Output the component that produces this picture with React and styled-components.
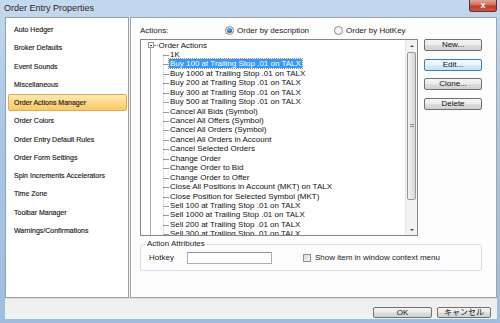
import React from "react";
import styled, { createGlobalStyle, css } from "styled-components";

const Global = createGlobalStyle`
  html, body { margin: 0; padding: 0; background: #fff; }
  body { font-family: "Liberation Sans", Arial, sans-serif; }
  * { box-sizing: border-box; }
`;

// window frame
const Window = styled.div`
  width: 500px;
  height: 323px;
  display: flex;
  flex-direction: column;
  padding: 0 3px 4px 5px;
  background: linear-gradient(180deg, #c3d8ee 0%, #aac6e5 40%, #9fbddf 100%);
  overflow: hidden;
`;

const TitleBar = styled.div`
  height: 17px;
  flex: none;
  display: flex;
  align-items: flex-start;
  justify-content: space-between;
`;

const Title = styled.div`
  margin-left: -1px;
  font-size: 9px;
  line-height: 17px;
  color: #1a1a1a;
  text-shadow: 0 0 4px #e8f1fb;
`;

const CloseBtn = styled.div`
  width: 28px;
  height: 12px;
  display: flex;
  align-items: center;
  justify-content: center;
  border: 1px solid #6b2a22;
  border-top: none;
  border-radius: 0 0 3px 3px;
  background: linear-gradient(180deg, #e4a597 0%, #cf6e5b 45%, #bb3f2c 55%, #c9593f 100%);
  color: #fff;
  font-size: 9px;
  font-weight: bold;
  line-height: 1;
`;

// body: sidebar + content
const Body = styled.div`
  flex: 1;
  min-height: 0;
  display: flex;
  background: #f0f0f0;
`;

const Sidebar = styled.div`
  width: 124px;
  flex: none;
  background: #fff;
  border: 1px solid #9a9fa6;
  padding: 3px 1px 0 2px;
`;

const NavItem = styled.div`
  height: 17px;
  margin-bottom: 1.25px;
  padding-left: 5px;
  display: flex;
  align-items: center;
  font-size: 7px;
  color: #1c1c1c;
  -webkit-text-stroke: 0.15px #1c1c1c;
  border: 1px solid transparent;
  border-radius: 2px;
  ${(p) =>
    p.$active &&
    css`
      background: linear-gradient(180deg, #fdeab0 0%, #fcd98a 50%, #f9c869 100%);
      border-color: #e7a94a;
    `}
`;

const Content = styled.div`
  flex: 1;
  margin-left: 1px;
  background: #fdfdfd;
  border: 1px solid #a0a4aa;
  padding: 7px 0 0 9px;
  display: flex;
  flex-direction: column;
`;

const TopRow = styled.div`
  height: 11px;
  display: flex;
  align-items: center;
  font-size: 8px;
  color: #1a1a1a;
`;

const ActionsLabel = styled.span`
  width: 85px;
`;

const RadioOption = styled.label`
  display: flex;
  align-items: center;
  gap: 3px;
  margin-right: ${(p) => p.$gap || 0}px;
`;

const Radio = styled.span`
  width: 9px;
  height: 9px;
  border-radius: 50%;
  border: 1px solid #8a8c8e;
  background: radial-gradient(circle at 50% 40%, #ffffff 0%, #e4e4e4 100%);
  display: flex;
  align-items: center;
  justify-content: center;
  &::after {
    content: "";
    width: 5px;
    height: 5px;
    border-radius: 50%;
    background: ${(p) =>
      p.$checked ? "radial-gradient(circle at 40% 35%, #7eb3e6 0%, #1d5b98 70%)" : "transparent"};
  }
`;

const MainRow = styled.div`
  display: flex;
  gap: 6px;
  margin-top: 3px;
`;

const TreeBox = styled.div`
  width: 278px;
  height: 197px;
  border: 1px solid #828790;
  background: #fff;
  display: flex;
`;

const TreeList = styled.div`
  flex: 1;
  overflow: hidden;
  padding-top: 0.5px;
  font-size: 8px;
  line-height: 9.45px;
  color: #111;
  background: linear-gradient(#a8a8a8, #a8a8a8) no-repeat 9px 7px / 1px 100%,
    repeating-linear-gradient(180deg, #c4c4c4 0 1px, transparent 1px 2px) no-repeat 22px 14px / 1px 100%;
`;

const RootRow = styled.div`
  height: 9.45px;
  display: flex;
  align-items: center;
  padding-left: 6.5px;
  white-space: nowrap;
`;

const Expander = styled.span`
  width: 6px;
  height: 6px;
  border: 1px solid #8f8f8f;
  background: #fff;
  display: flex;
  align-items: center;
  justify-content: center;
  &::after {
    content: "";
    width: 2px;
    height: 1px;
    background: #333;
  }
`;

const RootDash = styled.span`
  width: 4px;
  margin: 0 1px 0 0;
  border-top: 1px dotted #8f8f8f;
`;

const ChildRow = styled.div`
  position: relative;
  height: 9.45px;
  padding-left: 28px;
  white-space: nowrap;
  &::before {
    content: "";
    position: absolute;
    left: 22px;
    top: 5px;
    width: 6px;
    border-top: 1px solid #9a9a9a;
  }
`;

const ItemText = styled.span`
  padding: 0 1px;
  ${(p) =>
    p.$selected &&
    css`
      background: #3399ff;
      color: #fff;
      outline: 1px dotted #c08a3e;
    `}
`;

const Scrollbar = styled.div`
  width: 12px;
  flex: none;
  display: flex;
  flex-direction: column;
  background: #f2f2f2;
  border-left: 1px solid #e8e8e8;
`;

const ScrollArrow = styled.div`
  height: 11px;
  display: flex;
  align-items: center;
  justify-content: center;
  &::after {
    content: "";
    border-left: 2px solid transparent;
    border-right: 2px solid transparent;
    ${(p) => (p.$down ? "border-top: 2px solid #444;" : "border-bottom: 2px solid #444;")}
  }
`;

const Track = styled.div`
  flex: 1;
  padding: 1px 1px 0;
`;

const Thumb = styled.div`
  height: 148px;
  border: 1px solid #979797;
  border-radius: 2px;
  background: linear-gradient(90deg, #f3f3f3 0%, #e5e5e5 50%, #d8d8d8 100%);
  display: flex;
  align-items: center;
  justify-content: center;
  &::after {
    content: "";
    width: 4px;
    height: 4px;
    background: repeating-linear-gradient(180deg, #8a8a8a 0 1px, transparent 1px 2px);
  }
`;

const ButtonCol = styled.div`
  display: flex;
  flex-direction: column;
  gap: 7.5px;
`;

const PushButton = styled.button`
  width: ${(p) => p.$w || 58}px;
  height: ${(p) => p.$h || 12}px;
  padding: 0;
  font-family: "Liberation Sans", "Noto Sans CJK JP", sans-serif;
  font-size: 8px;
  line-height: 10px;
  color: #111;
  border-radius: 2px;
  border: 1px solid #707070;
  background: linear-gradient(180deg, #f4f4f4 0%, #ececec 48%, #dddddd 52%, #d0d0d0 100%);
  ${(p) =>
    p.$default &&
    css`
      border-color: #3c7fb1;
      background: linear-gradient(180deg, #f4fafe 0%, #e6f3fc 48%, #d5ecfb 52%, #c6e5fb 100%);
    `}
`;

const GroupBox = styled.fieldset`
  width: 342px;
  margin: 3px 0 0;
  padding: 2px 8px 6px;
  border: 1px solid #d5dfe5;
  border-radius: 3px;
  min-inline-size: 0;
`;

const Legend = styled.legend`
  padding: 0 2px;
  margin-left: -4px;
  font-size: 8px;
  line-height: 10px;
  color: #1a1a1a;
`;

const AttrRow = styled.div`
  height: 13px;
  display: flex;
  align-items: center;
  font-size: 8px;
  color: #1a1a1a;
`;

const AttrLabel = styled.span`
  width: 38px;
`;

const TextInput = styled.div`
  width: 85px;
  height: 12px;
  border: 1px solid #abadb3;
  border-top-color: #8e9199;
  background: #fff;
`;

const CheckOption = styled.label`
  margin-left: 31px;
  display: flex;
  align-items: center;
  gap: 4px;
`;

const Checkbox = styled.span`
  width: 8px;
  height: 8px;
  border: 1px solid #8e8f8f;
  background: linear-gradient(135deg, #d9d9d9 0%, #f4f4f4 100%);
`;

const Footer = styled.div`
  height: 21px;
  flex: none;
  display: flex;
  justify-content: flex-end;
  align-items: flex-start;
  gap: 5px;
  padding: 8px 6px 0 0;
  background: #f0f0f0;
  border-top: 1px solid #dcdcdc;
`;

const navItems = [
  "Auto Hedger",
  "Broker Defaults",
  "Event Sounds",
  "Miscellaneous",
  "Order Actions Manager",
  "Order Colors",
  "Order Entry Default Rules",
  "Order Form Settings",
  "Spin Increments Accelerators",
  "Time Zone",
  "Toolbar Manager",
  "Warnings/Confirmations",
];

const actions = [
  "1K",
  "Buy 100 at Trailing Stop .01 on TALX",
  "Buy 1000 at Trailing Stop .01 on TALX",
  "Buy 200 at Trailing Stop .01 on TALX",
  "Buy 300 at Trailing Stop .01 on TALX",
  "Buy 500 at Trailing Stop .01 on TALX",
  "Cancel All Bids (Symbol)",
  "Cancel All Offers (Symbol)",
  "Cancel All Orders (Symbol)",
  "Cancel All Orders in Account",
  "Cancel Selected Orders",
  "Change Order",
  "Change Order to Bid",
  "Change Order to Offer",
  "Close All Positions in Account (MKT) on TALX",
  "Close Position for Selected Symbol (MKT)",
  "Sell 100 at Trailing Stop .01 on TALX",
  "Sell 1000 at Trailing Stop .01 on TALX",
  "Sell 200 at Trailing Stop .01 on TALX",
  "Sell 300 at Trailing Stop .01 on TALX",
];

export default function App() {
  return (
    <>
      <Global />
      <Window>
        <TitleBar>
          <Title>Order Entry Properties</Title>
          <CloseBtn>x</CloseBtn>
        </TitleBar>

        <Body>
          <Sidebar>
            {navItems.map((item) => (
              <NavItem key={item} $active={item === "Order Actions Manager"}>
                {item}
              </NavItem>
            ))}
          </Sidebar>

          <Content>
            <TopRow>
              <ActionsLabel>Actions:</ActionsLabel>
              <RadioOption $gap={25}>
                <Radio $checked />
                Order by description
              </RadioOption>
              <RadioOption>
                <Radio />
                Order by HotKey
              </RadioOption>
            </TopRow>

            <MainRow>
              <TreeBox>
                <TreeList>
                  <RootRow>
                    <Expander />
                    <RootDash />
                    Order Actions
                  </RootRow>
                  {actions.map((a, i) => (
                    <ChildRow key={a}>
                      <ItemText $selected={i === 1}>{a}</ItemText>
                    </ChildRow>
                  ))}
                </TreeList>
                <Scrollbar>
                  <ScrollArrow />
                  <Track>
                    <Thumb />
                  </Track>
                  <ScrollArrow $down />
                </Scrollbar>
              </TreeBox>

              <ButtonCol>
                <PushButton>New...</PushButton>
                <PushButton $default>Edit...</PushButton>
                <PushButton>Clone...</PushButton>
                <PushButton>Delete</PushButton>
              </ButtonCol>
            </MainRow>

            <GroupBox>
              <Legend>Action Attributes</Legend>
              <AttrRow>
                <AttrLabel>Hotkey</AttrLabel>
                <TextInput />
                <CheckOption>
                  <Checkbox />
                  Show item in window context menu
                </CheckOption>
              </AttrRow>
            </GroupBox>
          </Content>
        </Body>

        <Footer>
          <PushButton $w={59} $h={11}>OK</PushButton>
          <PushButton $w={54} $h={11}>キャンセル</PushButton>
        </Footer>
      </Window>
    </>
  );
}
